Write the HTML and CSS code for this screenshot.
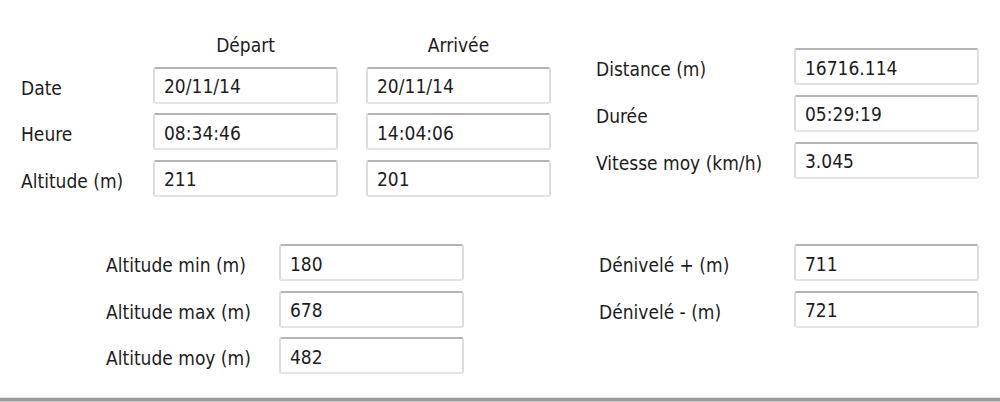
FILE: index.html
```html
<!doctype html>
<html>
<head>
  <title>Résumé du parcours</title>
  <link rel="stylesheet" href="styles.css">
</head>
<body>
  <div id="container">
    <div class="top">
      <div class="points">
        <span></span>
        <span class="head">Départ</span>
        <span class="head">Arrivée</span>

        <label>Date</label>
        <input class="field" value="20/11/14" readonly />
        <input class="field" value="20/11/14" readonly />

        <label>Heure</label>
        <input class="field" value="08:34:46" readonly />
        <input class="field" value="14:04:06" readonly />

        <label>Altitude (m)</label>
        <input class="field" value="211" readonly />
        <input class="field" value="201" readonly />
      </div>

      <div class="totals">
        <label>Distance (m)</label>
        <input class="field" value="16716.114" readonly />
        <label>Durée</label>
        <input class="field" value="05:29:19" readonly />
        <label>Vitesse moy (km/h)</label>
        <input class="field" value="3.045" readonly />
      </div>
    </div>

    <div class="bottom">
      <div class="alts">
        <label>Altitude min (m)</label>
        <input class="field" value="180" readonly />
        <label>Altitude max (m)</label>
        <input class="field" value="678" readonly />
        <label>Altitude moy (m)</label>
        <input class="field" value="482" readonly />
      </div>

      <div class="denivs">
        <label>Dénivelé + (m)</label>
        <input class="field" value="711" readonly />
        <label>Dénivelé - (m)</label>
        <input class="field" value="721" readonly />
      </div>
    </div>

    <div class="rule"></div>
  </div>
</body>
</html>
```

FILE: styles.css
```css
body {
  margin: 0;
  background: #fff;
  color: #1c1c22;
  font-family: "DejaVu Sans Condensed", "DejaVu Sans", sans-serif;
  font-stretch: condensed;
  font-size: 19px;
}

#container {
  width: 1000px;
  height: 402px;
  overflow: hidden;
}

label {
  white-space: nowrap;
  align-self: center;
  padding-top: 5px;
}

.field {
  box-sizing: border-box;
  width: 185px;
  height: 37px;
  margin: 0;
  padding: 2px 0 0 9px;
  border: 2px solid;
  border-color: #b4b4b4 #dcdcdc #e4e4e4 #dcdcdc;
  border-radius: 3px;
  background: #fff;
  color: #1c1c22;
  font: inherit;
  outline: none;
}

.top {
  display: flex;
  align-items: flex-start;
  padding: 33px 0 0 21px;
}

.points {
  display: grid;
  grid-template-columns: 104px 185px 185px;
  grid-template-rows: 24px;
  column-gap: 28px;
  row-gap: 9.5px;
}

.head {
  text-align: center;
  line-height: 24px;
}

.totals {
  display: grid;
  grid-template-columns: 198px 185px;
  row-gap: 9.75px;
  margin: 15px 0 0 45px;
}

.bottom {
  display: flex;
  align-items: flex-start;
  margin-top: 47.5px;
}

.alts {
  display: grid;
  grid-template-columns: 173px 186px;
  row-gap: 9.5px;
  margin-left: 106px;
}

.denivs {
  display: grid;
  grid-template-columns: 195px 185px;
  row-gap: 9.5px;
  margin-left: 134px;
}

.rule {
  margin-top: 23px;
  height: 3px;
  background: #9c9c9c;
  border-top: 1px solid #e2e2e2;
  border-bottom: 1px solid #cdcdcd;
}
```
